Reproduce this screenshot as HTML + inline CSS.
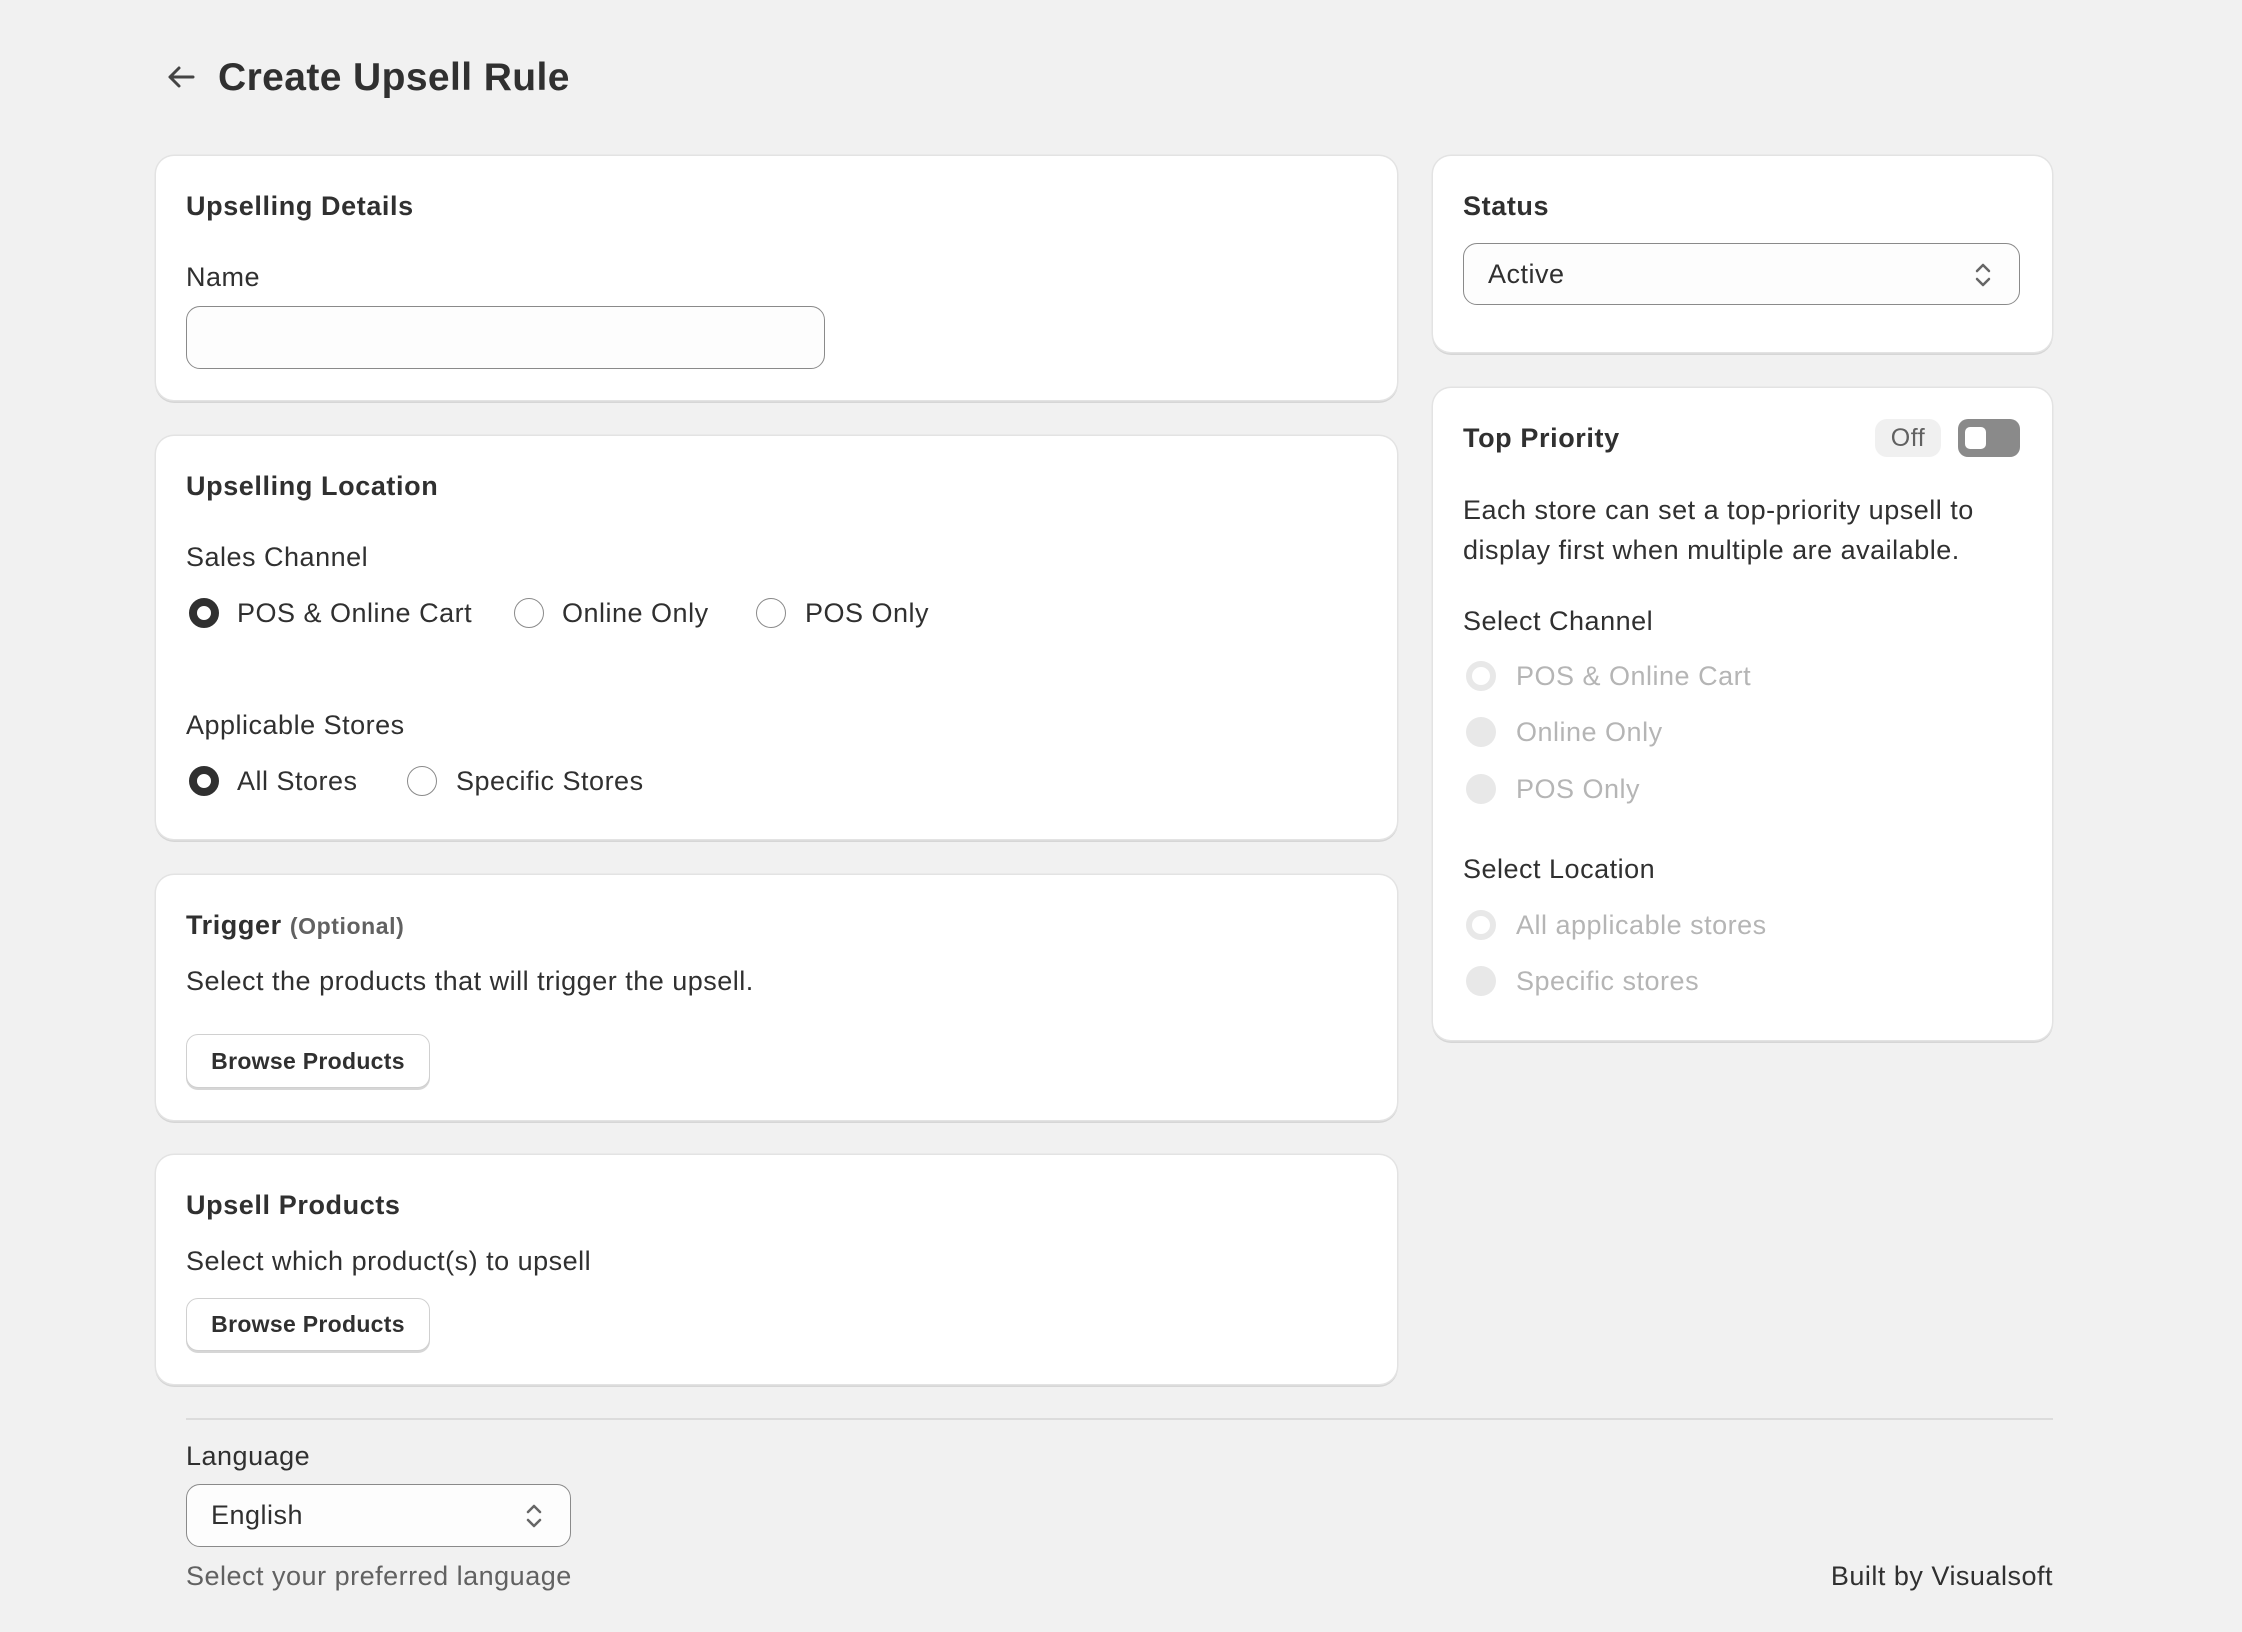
<!DOCTYPE html>
<html><head><meta charset="utf-8"><style>
*{box-sizing:border-box;margin:0;padding:0}
body{width:2242px;height:1632px;background:#f1f1f1;font-family:"Liberation Sans",Arial,sans-serif;color:#303030;position:relative;overflow:hidden;font-size:27px;letter-spacing:0.5px}
.a{position:absolute;white-space:nowrap}
.card{position:absolute;background:#fff;border-radius:18px;box-shadow:0 0 0 1.5px #e3e3e3,0 2px 0 1px #d6d6d6}
.h{font-weight:bold;font-size:27px;line-height:34px;letter-spacing:0.6px}
.t{line-height:34px}
.r{position:absolute;width:30px;height:30px;border-radius:50%;border:1.5px solid #8a8a8a;background:#fff}
.r.on{border:8px solid #303030}
.r.dis{border:none;background:#e8e8e8}
.r.dis.on{background:#fff;border:6px solid #e8e8e8}
.g{color:#b5b5b5}
.btn{position:absolute;border:1.5px solid #d0d0d0;border-radius:12px;background:#fff;font-weight:bold;font-size:23px;letter-spacing:0.3px;display:flex;align-items:center;justify-content:center;box-shadow:0 2px 0 #d6d6d6}
.sel{position:absolute;border:1.5px solid #8a8a8a;border-radius:14px;background:#fdfdfd;padding-left:24px;display:flex;align-items:center;font-size:27px}
</style></head><body>
<svg class="a" style="left:166px;top:64px" width="30" height="26" viewBox="0 0 30 26"><path d="M27 13H4M13 4L4 13l9 9" fill="none" stroke="#444" stroke-width="3" stroke-linecap="round" stroke-linejoin="round"/></svg>
<div class="a" style="left:218px;top:55px;font-size:39px;font-weight:bold;line-height:46px;letter-spacing:0.4px">Create Upsell Rule</div>

<div class="card" style="left:156px;top:156px;width:1241px;height:244px"></div>
<div class="a h" style="left:186px;top:189px">Upselling Details</div>
<div class="a t" style="left:186px;top:260px">Name</div>
<div class="a" style="left:186px;top:306px;width:639px;height:63px;border:1.5px solid #8a8a8a;border-radius:14px;background:#fdfdfd"></div>

<div class="card" style="left:156px;top:436px;width:1241px;height:403px"></div>
<div class="a h" style="left:186px;top:469px">Upselling Location</div>
<div class="a t" style="left:186px;top:540px">Sales Channel</div>
<div class="r on" style="left:189px;top:598px"></div><div class="a t" style="left:237px;top:596px">POS &amp; Online Cart</div>
<div class="r" style="left:514px;top:598px"></div><div class="a t" style="left:562px;top:596px">Online Only</div>
<div class="r" style="left:756px;top:598px"></div><div class="a t" style="left:805px;top:596px">POS Only</div>
<div class="a t" style="left:186px;top:708px">Applicable Stores</div>
<div class="r on" style="left:189px;top:766px"></div><div class="a t" style="left:237px;top:764px">All Stores</div>
<div class="r" style="left:407px;top:766px"></div><div class="a t" style="left:456px;top:764px">Specific Stores</div>

<div class="card" style="left:156px;top:875px;width:1241px;height:245px"></div>
<div class="a h" style="left:186px;top:908px">Trigger <span style="font-size:23px;color:#616161">(Optional)</span></div>
<div class="a t" style="left:186px;top:964px">Select the products that will trigger the upsell.</div>
<div class="btn" style="left:186px;top:1034px;width:244px;height:54px">Browse Products</div>

<div class="card" style="left:156px;top:1155px;width:1241px;height:229px"></div>
<div class="a h" style="left:186px;top:1188px">Upsell Products</div>
<div class="a t" style="left:186px;top:1244px">Select which product(s) to upsell</div>
<div class="btn" style="left:186px;top:1298px;width:244px;height:53px">Browse Products</div>

<div class="card" style="left:1433px;top:156px;width:619px;height:196px"></div>
<div class="a h" style="left:1463px;top:189px">Status</div>
<div class="sel" style="left:1463px;top:243px;width:557px;height:62px">Active
<svg style="position:absolute;right:26px;top:17px" width="20" height="28" viewBox="0 0 20 28"><path d="M4 10l6-6 6 6M4 18l6 6 6-6" fill="none" stroke="#666" stroke-width="2.5" stroke-linecap="round" stroke-linejoin="round"/></svg></div>

<div class="card" style="left:1433px;top:388px;width:619px;height:652px"></div>
<div class="a h" style="left:1463px;top:421px">Top Priority</div>
<div class="a" style="left:1875px;top:419px;width:66px;height:38px;border-radius:12px;background:#f0f0f0;color:#616161;font-size:25px;display:flex;align-items:center;justify-content:center">Off</div>
<div class="a" style="left:1958px;top:419px;width:62px;height:38px;border-radius:10px;background:#8a8a8a"><div style="position:absolute;left:7px;top:8px;width:21px;height:22px;border-radius:5px;background:#fff"></div></div>
<div class="a" style="left:1463px;top:490px;line-height:40px">Each store can set a top-priority upsell to<br>display first when multiple are available.</div>
<div class="a t" style="left:1463px;top:604px">Select Channel</div>
<div class="r dis on" style="left:1466px;top:661px"></div><div class="a t g" style="left:1516px;top:659px">POS &amp; Online Cart</div>
<div class="r dis" style="left:1466px;top:717px"></div><div class="a t g" style="left:1516px;top:715px">Online Only</div>
<div class="r dis" style="left:1466px;top:774px"></div><div class="a t g" style="left:1516px;top:772px">POS Only</div>
<div class="a t" style="left:1463px;top:852px">Select Location</div>
<div class="r dis on" style="left:1466px;top:910px"></div><div class="a t g" style="left:1516px;top:908px">All applicable stores</div>
<div class="r dis" style="left:1466px;top:966px"></div><div class="a t g" style="left:1516px;top:964px">Specific stores</div>

<div class="a" style="left:186px;top:1418px;width:1867px;height:1.5px;background:#dcdcdc"></div>
<div class="a t" style="left:186px;top:1439px">Language</div>
<div class="sel" style="left:186px;top:1484px;width:385px;height:63px">English
<svg style="position:absolute;right:26px;top:17px" width="20" height="28" viewBox="0 0 20 28"><path d="M4 10l6-6 6 6M4 18l6 6 6-6" fill="none" stroke="#666" stroke-width="2.5" stroke-linecap="round" stroke-linejoin="round"/></svg></div>
<div class="a t" style="left:186px;top:1559px;color:#616161">Select your preferred language</div>
<div class="a t" style="right:189px;top:1559px">Built by Visualsoft</div>
</body></html>
